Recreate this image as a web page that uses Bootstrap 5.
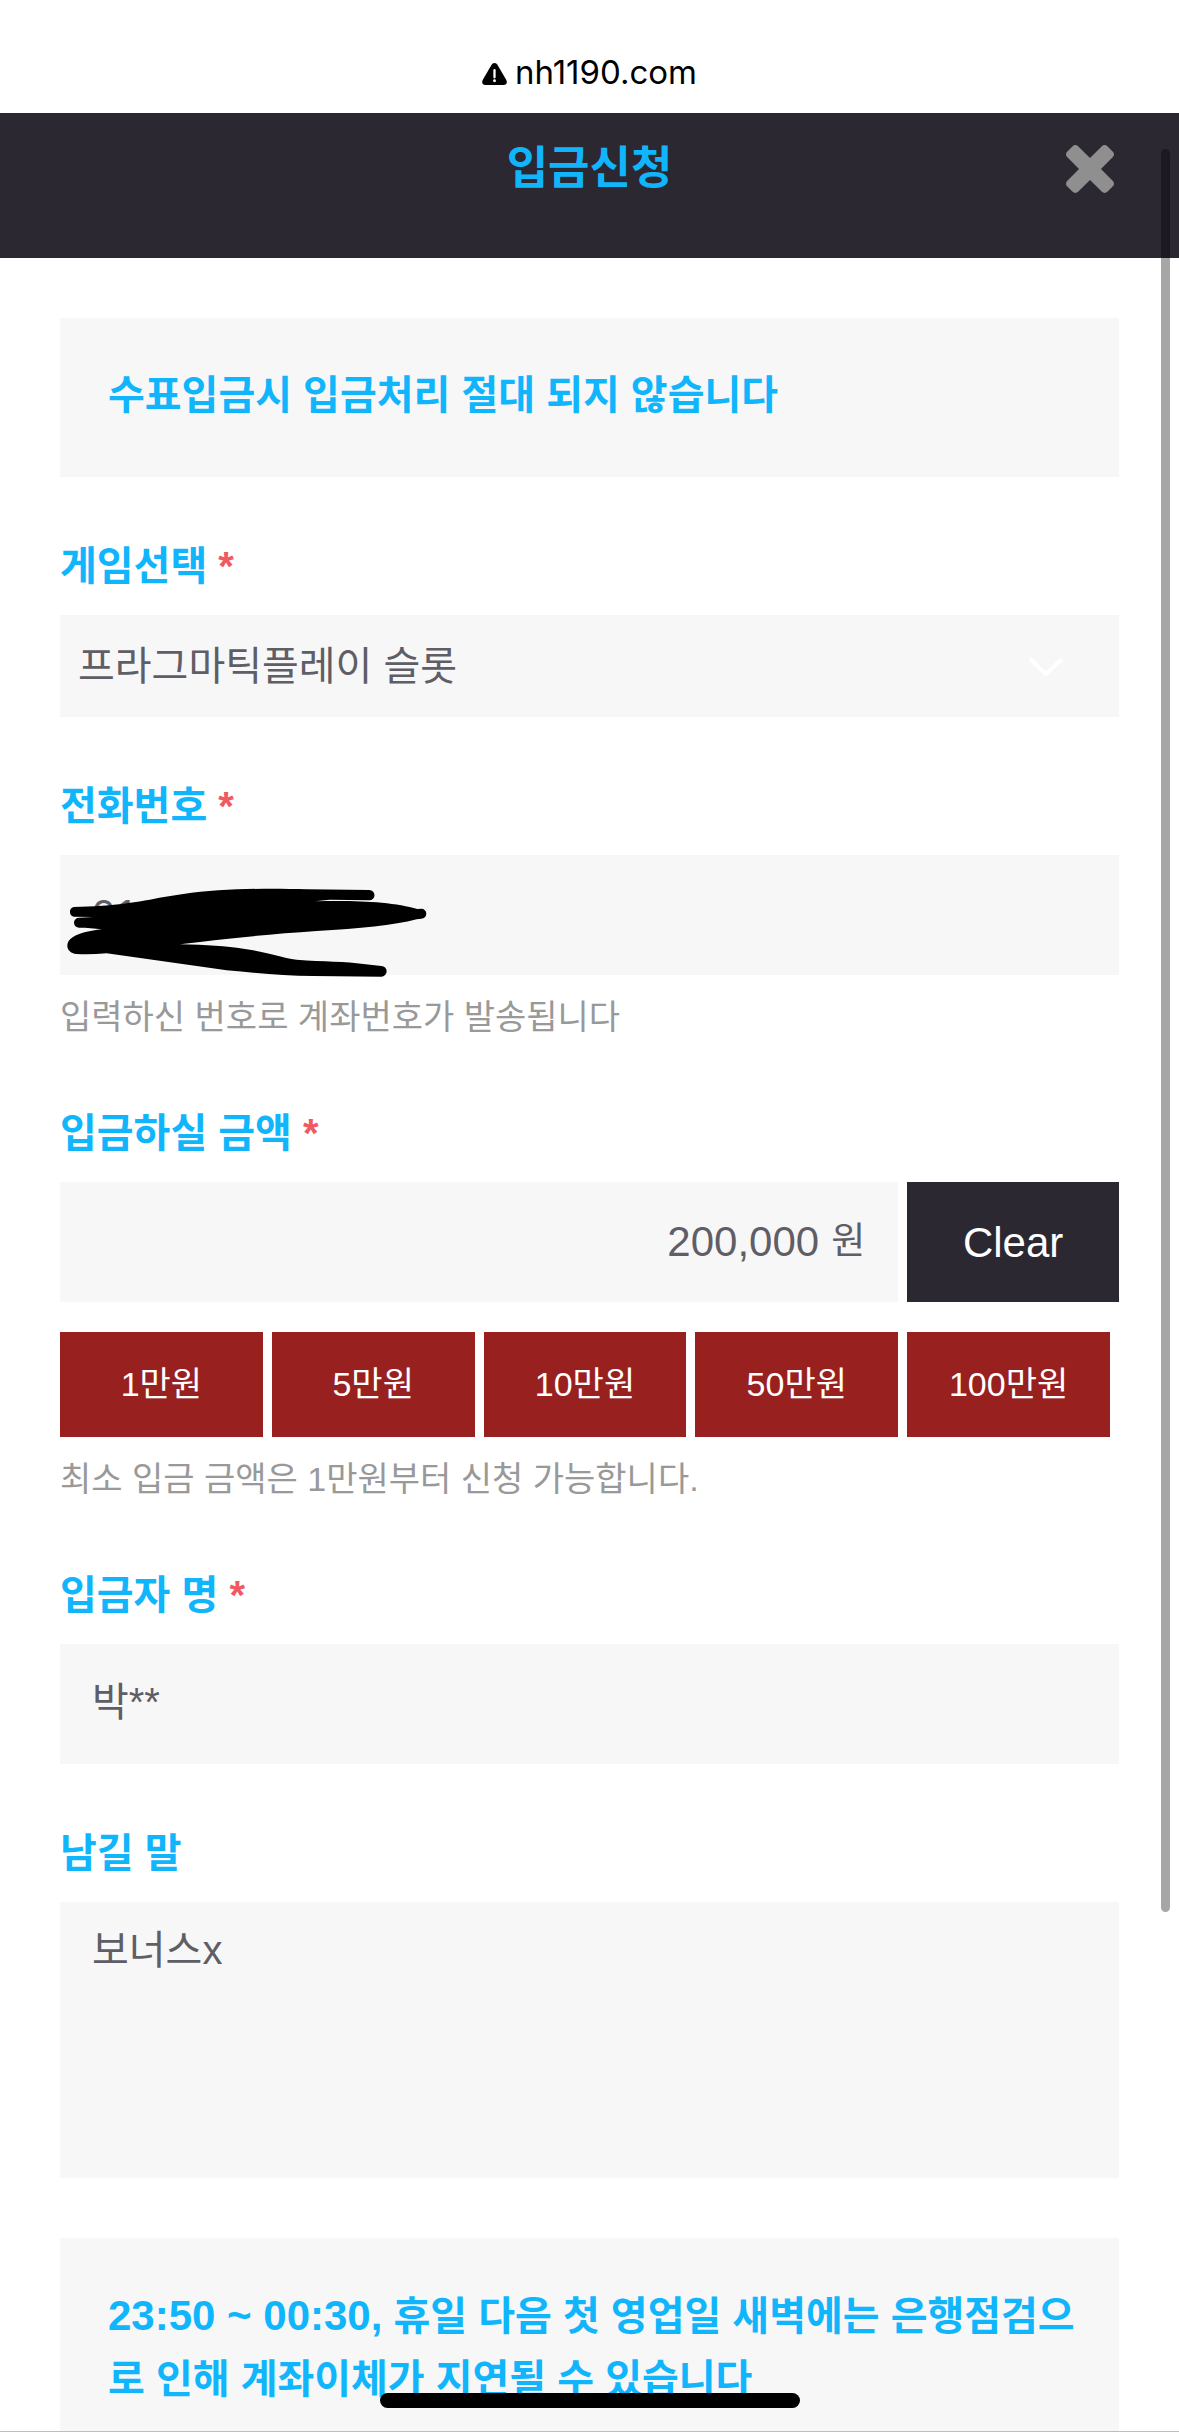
<!DOCTYPE html>
<html lang="ko">
<head>
<meta charset="utf-8">
<meta name="viewport" content="width=device-width, initial-scale=1">
<title>입금신청</title>
<link href="https://cdn.jsdelivr.net/npm/bootstrap@5.3.0/dist/css/bootstrap.min.css" rel="stylesheet">
<style>
  :root { --ink: #2b2832; --sky: #10b5fb; --field: #f7f7f7; --text: #5f5e66; }
  body { font-family: "Liberation Sans", "Noto Sans CJK KR", sans-serif; font-size: 40px; line-height: 63px; color: var(--text); }
  .url-bar { height: 113px; padding-top: 50px; gap: 8px; font-family: Inter, sans-serif; font-size: 33px; line-height: 44px; color: #000; }
  .url-bar svg { width: 25px; height: 22px; margin-top: 13px; }
  .page-head { height: 145px; padding-top: 24px; background: var(--ink); }
  .page-head h1 { font-size: 45px; line-height: 63px; color: var(--sky); }
  .close-btn { top: 32px; right: 65px; line-height: 0; }
  .close-btn svg { width: 48px; height: 48px; fill: #8f8f8f; }
  .page-body { padding: 60px 60px 0; scrollbar-width: none; }
  .page-body::-webkit-scrollbar { display: none; }
  .notice { padding: 46px 40px 50px 48px; background: var(--field); color: var(--sky); }
  .notice-time { font-size: 42px; }
  .field { margin-top: 58px; }
  .field-label { margin-bottom: 17px; color: var(--sky); }
  .field-label span { color: #f05a5f; }
  .field-box.form-control, .field-box.form-select { background-color: var(--field); color: var(--text); font-size: 40px; line-height: 63px; }
  .field-box.form-control { height: 120px; padding: 0 32px 10px; }
  .field-box.form-select { height: 102px; padding: 0 120px 0 18px; background-image: none; }
  .field-box.digits { padding-bottom: 0; font-size: 42px; }
  textarea.field-box.form-control { height: 276px; padding-top: 17px; resize: none; }
  .select-arrow { right: 54px; top: 40px; width: 38px; height: 24px; }
  .scribble { left: 0; top: 0; width: 360px; height: 124px; overflow: visible; }
  .field-hint { margin-top: 15px; font-size: 34px; line-height: 54px; color: #999; }
  .amount-box { flex: 1; margin-right: 9px; background: var(--field); }
  .amount-box .form-control { padding-right: 12px; }
  .amount-unit { padding-right: 33px; padding-bottom: 2px; font-size: 37px; }
  .clear-btn { width: 20%; background: var(--ink); font-size: 42px; }
  .quick-row { margin-top: 30px; }
  .quick-cell { width: 20%; padding-right: 9px; }
  .quick-cell .btn { height: 105px; background: #982120; font-size: 34px; }
  .closing-notice { margin-top: 60px; }
  .scroll-thumb { top: 149px; right: 9px; width: 9px; height: 1763px; border-radius: 5px; background: rgba(0,0,0,.35); }
  .home-bar { bottom: 24px; left: 50%; width: 420px; height: 15px; margin-left: -210px; background: #000; }
  .bottom-line { height: 1px; background: #bdbdbd; }
</style>
</head>
<body class="bg-white">
<div class="vh-100 d-flex flex-column overflow-hidden position-relative">
  <div class="url-bar d-flex justify-content-center flex-shrink-0">
    <svg viewBox="0 0 26 23" aria-hidden="true">
      <path d="M13 0c1.500 0 2.500.8 3.200 2l9 15.500c1.600 2.800.3 5.500-2.800 5.500H3.600C.5 23-.8 20.300.8 17.500l9-15.500C10.500.8 11.500 0 13 0z"/>
      <path d="M13 7.500v7.500" stroke="#fff" stroke-width="2.400" stroke-linecap="round"/><circle cx="13" cy="18.600" r="1.500" fill="#fff"/>
    </svg>
    <span>nh1190.com</span>
  </div>

  <header class="page-head position-relative text-center flex-shrink-0">
    <h1 class="fw-bold m-0">입금신청</h1>
    <button type="button" class="close-btn btn p-0 border-0 position-absolute" aria-label="닫기">
      <svg viewBox="302 366 1188 1188" aria-hidden="true"><path d="M1490 1322q0 40-28 68l-136 136q-28 28-68 28t-68-28l-294-294-294 294q-28 28-68 28t-68-28l-136-136q-28-28-28-68t28-68l294-294-294-294q-28-28-28-68t28-68l136-136q28-28 68-28t68 28l294 294 294-294q28-28 68-28t68 28l136 136q28 28 28 68t-28 68l-294 294 294 294q28 28 28 68z"/></svg>
    </button>
  </header>

  <main class="page-body flex-grow-1 overflow-auto">
    <form>
      <div class="notice fw-bold">수표입금시 입금처리 절대 되지 않습니다</div>

      <div class="field">
        <label class="field-label d-block fw-bold" for="game">게임선택 <span>*</span></label>
        <div class="position-relative">
          <select id="game" class="field-box form-select border-0 rounded-0"><option>프라그마틱플레이 슬롯</option></select>
          <svg class="select-arrow position-absolute pe-none" viewBox="0 0 38 24" fill="none" stroke="#fff" stroke-width="4" aria-hidden="true"><path d="M3 4l16 15L35 4"/></svg>
        </div>
      </div>

      <div class="field">
        <label class="field-label d-block fw-bold" for="phone">전화번호 <span>*</span></label>
        <div class="position-relative">
          <input id="phone" type="tel" class="field-box digits form-control border-0 rounded-0" value="01">
          <svg class="scribble position-absolute pe-none" viewBox="60 45 1080 372" aria-hidden="true">
            <path d="M101 201L165 199C290 192 350 172 430 162C540 146 680 144 800 148L988 150a15 15 0 0 1 0 31L870 179L824 184C930 180 1060 184 1132 207L1144 206a15 15 0 0 1 0 30L1130 238C1060 256 960 266 830 273C680 283 540 298 420 313C500 315 560 318 610 326C680 336 720 352 770 359C850 366 920 363 970 372L1024 378a16 16 0 0 1 0 32L820 408C730 407 640 398 560 391L200 340Q150 344 110 342C76 338 74 306 98 292C120 278 150 272 185 268L135 263L117 263a15 15 0 0 1 0-30L160 231L101 230a15 15 0 0 1 0-29z"/>
          </svg>
        </div>
        <div class="field-hint">입력하신 번호로 계좌번호가 발송됩니다</div>
      </div>

      <div class="field">
        <label class="field-label d-block fw-bold" for="amount">입금하실 금액 <span>*</span></label>
        <div class="d-flex">
          <div class="amount-box d-flex align-items-center">
            <input id="amount" type="text" inputmode="numeric" class="field-box digits form-control border-0 rounded-0 text-end" value="200,000">
            <span class="amount-unit">원</span>
          </div>
          <button type="button" class="clear-btn btn border-0 rounded-0 text-white p-0">Clear</button>
        </div>
        <div class="quick-row d-flex">
          <div class="quick-cell"><button type="button" class="btn w-100 border-0 rounded-0 text-white p-0">1만원</button></div>
          <div class="quick-cell"><button type="button" class="btn w-100 border-0 rounded-0 text-white p-0">5만원</button></div>
          <div class="quick-cell"><button type="button" class="btn w-100 border-0 rounded-0 text-white p-0">10만원</button></div>
          <div class="quick-cell"><button type="button" class="btn w-100 border-0 rounded-0 text-white p-0">50만원</button></div>
          <div class="quick-cell"><button type="button" class="btn w-100 border-0 rounded-0 text-white p-0">100만원</button></div>
        </div>
        <div class="field-hint">최소 입금 금액은 1만원부터 신청 가능합니다.</div>
      </div>

      <div class="field">
        <label class="field-label d-block fw-bold" for="payer">입금자 명 <span>*</span></label>
        <input id="payer" type="text" class="field-box form-control border-0 rounded-0" value="박**">
      </div>

      <div class="field">
        <label class="field-label d-block fw-bold" for="memo">남길 말</label>
        <textarea id="memo" class="field-box form-control border-0 rounded-0 d-block">보너스x</textarea>
      </div>

      <div class="notice closing-notice fw-bold"><span class="notice-time">23:50 ~ 00:30,</span> 휴일 다음 첫 영업일 새벽에는 은행점검으로 인해 계좌이체가 지연될 수 있습니다</div>
    </form>
  </main>

  <div class="scroll-thumb position-absolute"></div>
  <div class="home-bar position-absolute rounded-pill"></div>
  <div class="bottom-line position-absolute bottom-0 start-0 w-100"></div>
</div>
<script src="https://cdn.jsdelivr.net/npm/bootstrap@5.3.0/dist/js/bootstrap.bundle.min.js"></script>
</body>
</html>
